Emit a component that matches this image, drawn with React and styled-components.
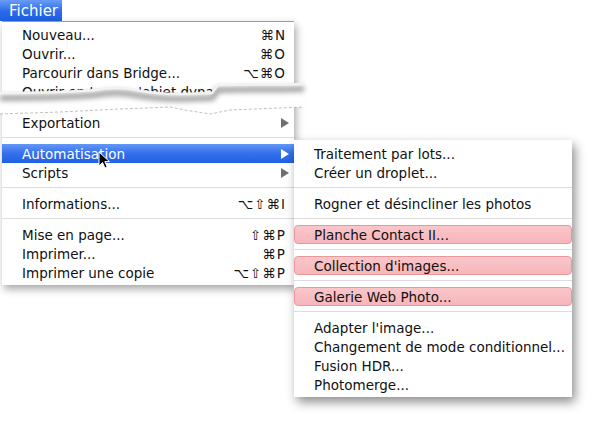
import React from "react";
import styled, { createGlobalStyle, css } from "styled-components";

const Global = createGlobalStyle`
  html, body { margin: 0; padding: 0; background: #fff; }
  body { font-family: "DejaVu Sans", "Liberation Sans", sans-serif; }
`;

const Stage = styled.div`
  position: relative;
  width: 600px;
  height: 424px;
  overflow: hidden;
  background: #fff;
`;

const MenuTitle = styled.div`
  width: 62px;
  height: 21px;
  box-sizing: border-box;
  padding-left: 9px;
  display: flex;
  align-items: center;
  color: #fff;
  font-size: 15px;
  background: linear-gradient(#6a9cf7, #2a6aea 55%, #1f5fe3);
`;

const Menu = styled.div`
  position: relative;
  margin-left: 2px;
  width: 292px;
  box-sizing: border-box;
  background: #fff;
  border-top: 1px solid #9c9c9c;
  padding: 3px 0 3px;
  box-shadow: 2px 4px 8px rgba(0, 0, 0, 0.35);
  display: flex;
  flex-direction: column;
`;

const SubMenu = styled.div`
  position: absolute;
  left: 294px;
  top: 140px;
  width: 278px;
  box-sizing: border-box;
  background: #fff;
  padding: 4px 0 3px;
  box-shadow: 3px 5px 10px rgba(0, 0, 0, 0.45);
  display: flex;
  flex-direction: column;
`;

const Row = styled.div`
  height: 19px;
  box-sizing: border-box;
  display: flex;
  align-items: center;
  padding: 0 8px 0 ${(p) => p.$indent || 20}px;
  font-size: 13.5px;
  color: #111;
  white-space: nowrap;
  ${(p) =>
    p.$active &&
    css`
      background: linear-gradient(#6397f6, #3470ec 50%, #1f60e4);
      color: #fff;
    `}
  ${(p) =>
    p.$pink &&
    css`
      background: linear-gradient(#fac6c9, #f6b6ba);
      border: 1px solid #ea979c;
      border-radius: 4px;
    `}
`;

const Label = styled.span`
  flex: 1;
  overflow: hidden;
`;

const Shortcut = styled.span`
  letter-spacing: 1px;
  font-size: 13.5px;
`;

const Arrow = styled.span`
  width: 0;
  height: 0;
  margin-right: -3px;
  border-top: 5px solid transparent;
  border-bottom: 5px solid transparent;
  border-left: 8px solid ${(p) => (p.$light ? "#fff" : "#707070")};
`;

const Separator = styled.div`
  height: 12px;
  box-sizing: border-box;
  padding-top: 5px;
  &::after {
    content: "";
    display: block;
    height: 1px;
    background: #dcdcdc;
  }
`;

const TornGap = styled.div`
  position: relative;
  height: 12px;
`;

const TearArt = styled.svg`
  position: absolute;
  left: -2px;
  top: -24px;
  width: 304px;
  height: 45px;
  overflow: visible;
`;

const Cursor = styled.svg`
  position: absolute;
  left: 98px;
  top: 151px;
  width: 13px;
  height: 19px;
`;

const upper =
  "M0,16 C30,16 60,16 95,13 C105,11 115,10 130,12 C140,14 160,17 180,17 C195,17 205,16 212,16 L218,8 C240,7 270,8 304,7";
const shadow =
  "M0,21 C30,21 60,21 95,18 C105,16 115,15 130,17 C140,19 160,22 180,22 C195,22 205,21 212,21 L218,13 C240,12 270,13 304,12";

function Tear() {
  return (
    <TearArt viewBox="0 0 304 45">
      <defs>
        <filter id="blur" x="-10%" y="-100%" width="120%" height="300%">
          <feGaussianBlur stdDeviation="2.4" />
        </filter>
      </defs>
      <path d={`${upper} L304,30 L230,33 L210,37 L185,33 L170,30 L120,32 L60,35 L0,37 Z`} fill="#fff" />
      <path d={shadow} fill="none" stroke="#6a6a6a" strokeWidth="6" opacity="0.6" filter="url(#blur)" />
      <path d={upper} fill="none" stroke="#f2f2f2" strokeWidth="2.5" />
      <path
        d="M0,37 L60,35 L120,32 L170,30 L185,33 L210,37 L230,33 L304,30"
        fill="none"
        stroke="#b0b0b0"
        strokeWidth="0.8"
        strokeDasharray="3 2"
      />
    </TearArt>
  );
}

const Item = ({ label, shortcut, arrow, active }) => (
  <Row $active={active}>
    <Label>{label}</Label>
    {shortcut && <Shortcut>{shortcut}</Shortcut>}
    {arrow && <Arrow $light={active} />}
  </Row>
);

const SubItem = ({ label, pink }) => (
  <Row $indent={pink ? 19 : 20} $pink={pink}>
    <Label>{label}</Label>
  </Row>
);

export default function App() {
  return (
    <Stage>
      <Global />
      <MenuTitle>Fichier</MenuTitle>
      <Menu>
        <Item label="Nouveau..." shortcut="⌘N" />
        <Item label="Ouvrir..." shortcut="⌘O" />
        <Item label="Parcourir dans Bridge..." shortcut="⌥⌘O" />
        <Item label="Ouvrir en tant qu'objet dynamique..." />
        <TornGap>
          <Tear />
        </TornGap>
        <Item label="Exportation" arrow />
        <Separator />
        <Item label="Automatisation" arrow active />
        <Item label="Scripts" arrow />
        <Separator />
        <Item label="Informations..." shortcut="⌥⇧⌘I" />
        <Separator />
        <Item label="Mise en page..." shortcut="⇧⌘P" />
        <Item label="Imprimer..." shortcut="⌘P" />
        <Item label="Imprimer une copie" shortcut="⌥⇧⌘P" />
      </Menu>
      <SubMenu>
        <SubItem label="Traitement par lots..." />
        <SubItem label="Créer un droplet..." />
        <Separator />
        <SubItem label="Rogner et désincliner les photos" />
        <Separator />
        <SubItem label="Planche Contact II..." pink />
        <Separator />
        <SubItem label="Collection d'images..." pink />
        <Separator />
        <SubItem label="Galerie Web Photo..." pink />
        <Separator />
        <SubItem label="Adapter l'image..." />
        <SubItem label="Changement de mode conditionnel..." />
        <SubItem label="Fusion HDR..." />
        <SubItem label="Photomerge..." />
      </SubMenu>
      <Cursor viewBox="0 0 13 19">
        <path d="M1,1 L1,15 L4.5,11.5 L7,17 L9.2,16 L6.8,10.6 L11.5,10.6 Z" fill="#000" stroke="#fff" strokeWidth="1" />
      </Cursor>
    </Stage>
  );
}
